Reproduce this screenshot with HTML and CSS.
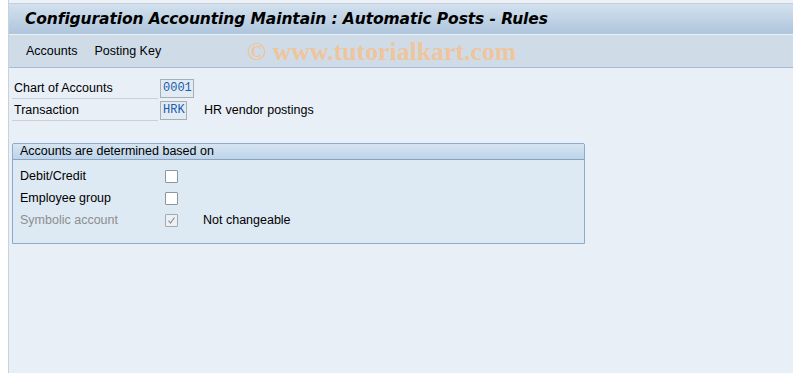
FILE: index.html
```html
<!DOCTYPE html>
<html>
<head>
<meta charset="utf-8">
<link rel="stylesheet" href="styles.css">
</head>
<body>
<div class="frame">
  <div class="titlebar">Configuration Accounting Maintain : Automatic Posts - Rules</div>
  <div class="menubar">
    <span class="menu-item">Accounts</span>
    <span class="menu-item">Posting Key</span>
    <span class="watermark">© www.tutorialkart.com</span>
  </div>
  <div class="content">
    <div class="field-row">
      <span class="label">Chart of Accounts</span>
      <span class="input w4">0001</span>
    </div>
    <div class="field-row">
      <span class="label">Transaction</span>
      <span class="input w3">HRK</span>
      <span class="desc">HR vendor postings</span>
    </div>
    <div class="group">
      <div class="group-head">Accounts are determined based on</div>
      <div class="group-body">
        <div class="cb-row">
          <span class="cb-label">Debit/Credit</span>
          <span class="checkbox"></span>
        </div>
        <div class="cb-row">
          <span class="cb-label">Employee group</span>
          <span class="checkbox"></span>
        </div>
        <div class="cb-row">
          <span class="cb-label disabled">Symbolic account</span>
          <span class="checkbox checked"><svg width="11" height="11" viewBox="0 0 11 11"><path d="M2.5 5.5 L4.5 8 L8.5 2.5" fill="none" stroke="#8a9098" stroke-width="1.2"/></svg></span>
          <span class="cb-desc">Not changeable</span>
        </div>
      </div>
    </div>
  </div>
</div>
</body>
</html>
```

FILE: styles.css
```css
html, body {
  margin: 0;
  padding: 0;
  height: 100%;
}
body {
  background: #ffffff;
  font-family: "Liberation Sans", Arial, sans-serif;
  font-size: 12.5px;
  color: #000;
}
.frame {
  margin: 0 0 0 8px;
  padding-top: 3px;
  background: linear-gradient(#eef1f5, #eef1f5) top/100% 3px no-repeat, #e8eff7;
  min-height: 370px;
  border-left: 1px solid #c6d2de;
  display: flex;
  flex-direction: column;
}
.titlebar {
  height: 30px;
  border-top: 1px solid #c2cedb;
  border-bottom: 1px solid #eaf1f8;
  background: linear-gradient(#d3e1ee, #aec5dc);
  font-family: "DejaVu Sans", Verdana, sans-serif;
  font-weight: bold;
  font-style: italic;
  font-size: 15.5px;
  line-height: 30px;
  padding-left: 16px;
  letter-spacing: -0.1px;
  color: #000;
}
.menubar {
  height: 32px;
  background: #cfdce8;
  border-bottom: 1px solid #a9bbce;
  display: flex;
  align-items: center;
  padding-left: 17px;
  gap: 17px;
  position: relative;
}
.menu-item {
  font-size: 12.5px;
  color: #000;
}
.watermark {
  position: absolute;
  left: 238px;
  top: 2px;
  font-family: "Liberation Serif", "Times New Roman", serif;
  font-weight: bold;
  font-size: 25.8px;
  color: #eec59c;
  white-space: nowrap;
}
.content {
  flex: 1;
  padding: 9px 0 0 3px;
}
.field-row {
  display: flex;
  align-items: center;
  height: 22px;
}
.label {
  width: 146px;
  height: 21px;
  line-height: 21px;
  padding-left: 2px;
  border-bottom: 1px solid #c8d0d8;
  box-sizing: border-box;
}
.input {
  margin-left: 2px;
  height: 19px;
  box-sizing: border-box;
  border: 1px solid #a7aeb5;
  background: #e2ebf4;
  font-family: "Liberation Mono", "Courier New", monospace;
  font-size: 12px;
  line-height: 17px;
  color: #1b5cab;
  padding-left: 2px;
}
.w4 { width: 34px; }
.w3 { width: 27px; }
.desc {
  margin-left: 17px;
}
.group {
  margin-top: 22px;
  margin-left: 0;
  width: 571px;
  border: 1px solid #8eaacb;
  border-radius: 2px 2px 0 0;
  background: #dde9f3;
}
.group-head {
  height: 15px;
  line-height: 15px;
  background: linear-gradient(#d7e5f2, #bdd4e9);
  border-bottom: 1px solid #8aa3c0;
  padding-left: 7px;
}
.group-body {
  padding: 5px 0 12px 7px;
}
.cb-row {
  display: flex;
  align-items: center;
  height: 22px;
}
.cb-label {
  width: 145px;
}
.cb-label.disabled {
  color: #8e8e8e;
}
.checkbox {
  width: 13px;
  height: 13px;
  box-sizing: border-box;
  border: 1px solid #8f959c;
  background: #ffffff;
  border-radius: 1px;
  display: flex;
  align-items: center;
  justify-content: center;
}
.checkbox.checked {
  background: #eef1f4;
  border-color: #a4a9ae;
}
.cb-desc {
  margin-left: 25px;
}
```
